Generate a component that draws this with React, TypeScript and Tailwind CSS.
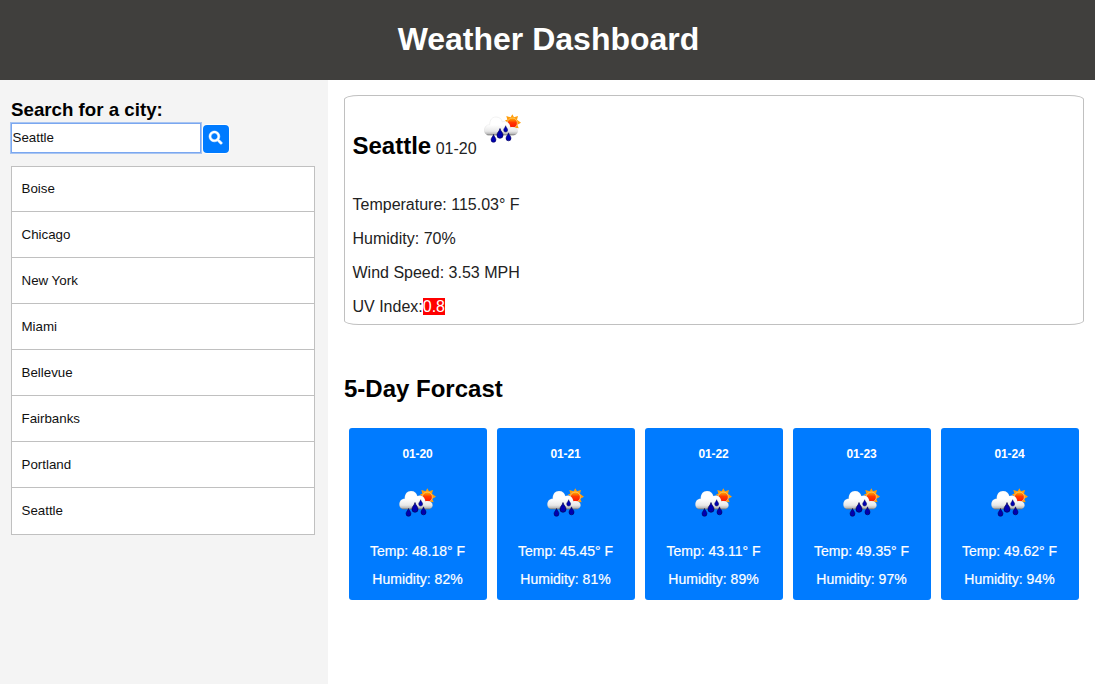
import React from "react";
import { FaSearch } from "react-icons/fa";

const cities = ["Boise", "Chicago", "New York", "Miami", "Bellevue", "Fairbanks", "Portland", "Seattle"];

const forecast = [
  { date: "01-20", temp: "48.18", humidity: 82 },
  { date: "01-21", temp: "45.45", humidity: 81 },
  { date: "01-22", temp: "43.11", humidity: 89 },
  { date: "01-23", temp: "49.35", humidity: 97 },
  { date: "01-24", temp: "49.62", humidity: 94 },
];

function Drop({ x, y, s }: { x: number; y: number; s: number }) {
  return (
    <path
      transform={`translate(${x} ${y}) scale(${s})`}
      d="M0-13C1-7 7.5-3 7.5 3A7.5 8 0 0 1-7.5 3C-7.5-3-1-7 0-13Z"
      fill="#0000b0"
      stroke="#00004c"
      strokeWidth="1.6"
    />
  );
}

function RainIcon({ id, className = "" }: { id: string; className?: string }) {
  return (
    <svg viewBox="27 24 111 87" className={`h-[29px] w-[37px] shrink-0 ${className}`} aria-hidden="true">
      <defs>
        <linearGradient id={`${id}-cloud`} gradientUnits="userSpaceOnUse" x1="0" y1="32" x2="0" y2="88">
          <stop offset="0.45" stopColor="#ffffff" />
          <stop offset="0.78" stopColor="#e8e8e8" />
          <stop offset="0.92" stopColor="#bcbcbc" />
          <stop offset="1" stopColor="#6a6a6a" />
        </linearGradient>
        <linearGradient id={`${id}-sun`} x1="0" y1="0" x2="0" y2="1">
          <stop offset="0" stopColor="#ffb800" />
          <stop offset="0.45" stopColor="#ff3a00" />
          <stop offset="1" stopColor="#ff1000" />
        </linearGradient>
      </defs>
      <path
        fill="#ff9d0a"
        d="M112 25L117 34L129 30L126 41L138 50L127 56L131 67L119 65L112 74L104 64L94 60L98 51L90 43L97 41L94 30L107 34Z"
      />
      <circle cx="112" cy="51" r="15" fill={`url(#${id}-sun)`} stroke="#ffd08a" strokeWidth="2" />
      <path
        fill={`url(#${id}-cloud)`}
        stroke="#8a8a8a"
        strokeOpacity="0.35"
        strokeWidth="1"
        d="M41 88C33 88 28 81 28 73C28 63 34 56 44 56C44 42 51 33 63 33C74 33 80 39 82 48C93 43 105 50 106 64C119 61 128 67 128 76C128 83 122 88 115 88Z"
      />
      <Drop x={55.5} y={98} s={0.98} />
      <Drop x={75} y={83.5} s={1.22} />
      <Drop x={92} y={69.5} s={0.8} />
      <Drop x={100.5} y={93.5} s={1} />
    </svg>
  );
}

export default function App() {
  return (
    <div className="flex h-[684px] w-full flex-col overflow-hidden bg-white font-['Liberation_Sans',Arial,sans-serif] text-black">
      <header className="flex h-20 shrink-0 items-center justify-center bg-[#403f3d]">
        <h1 className="pb-0.5 pl-0.5 text-[32px] leading-[36px] font-bold text-white">Weather Dashboard</h1>
      </header>

      <div className="flex min-h-0 flex-1">
        <aside className="w-[328px] shrink-0 bg-[#f4f4f4] pt-[19px] pr-[13px] pl-[11px]">
          <h3 className="text-[18.72px] leading-[22px] font-bold">Search for a city:</h3>
          <div className="mt-[2px] flex items-start gap-[2px]">
            <input
              aria-label="City"
              defaultValue="Seattle"
              className="h-[30px] w-[190px] border border-[#7aa7f0] bg-white pr-px pb-px pl-[0.5px] text-[13.33px] text-[#111] shadow-[0_0_0_1px_#a9c5f1] outline-none"
            />
            <button
              aria-label="Search"
              className="mt-[2px] flex h-[28px] w-[26px] items-center justify-center rounded-[4px] bg-[#007bff] pb-[2px] text-white shadow-[0_0_0_1px_#ffffff]"
            >
              <FaSearch className="size-[13.33px] overflow-visible stroke-white stroke-[20]" />
            </button>
          </div>
          <ul className="mt-[13px] border border-[#c0c0c0] bg-white">
            {cities.map((city) => (
              <li
                key={city}
                className="h-[46px] border-b border-[#c0c0c0] pl-[9.5px] text-[13.33px] leading-[45px] text-[#111] first:h-[45px] first:leading-[43px] last:border-b-0"
              >
                {city}
              </li>
            ))}
          </ul>
        </aside>

        <main className="flex-1 pt-[15px] pr-[11px] pl-4">
          <section className="h-[230px] rounded-[2%] border border-[#c0c0c0] pt-[18px] pl-[7.5px]">
            <div className="flex h-[74px] items-start">
              <h2 className="mt-[18px] text-2xl leading-[27px] font-bold">Seattle</h2>
              <span className="mt-[26px] ml-[4.5px] text-base leading-[18px] text-[#222]">01-20</span>
              <RainIcon id="current" className="ml-[7px]" />
            </div>
            <div className="text-base leading-[34px] text-[#222]">
              <p>Temperature: 115.03° F</p>
              <p>Humidity: 70%</p>
              <p>Wind Speed: 3.53 MPH</p>
              <p>
                UV Index:<span className="bg-[#ff0000] text-white">0.8</span>
              </p>
            </div>
          </section>

          <h2 className="mt-[50px] text-2xl leading-[27px] font-bold">5-Day Forcast</h2>
          <div className="mt-[26px] flex gap-[10px] pl-[5px]">
            {forecast.map((day) => (
              <article
                key={day.date}
                className="flex h-[172px] w-[138px] flex-col items-center rounded-[3px] bg-[#007bff] pt-[19px] pr-px text-white"
              >
                <h6 className="text-[12px] leading-[14px] font-bold tracking-[-0.1px]">{day.date}</h6>
                <RainIcon id={`day-${day.date}`} className="mt-[27px]" />
                <p className="mt-[26px] text-[14px] leading-4 [-webkit-text-stroke:0.2px_white]">Temp: {day.temp}° F</p>
                <p className="mt-3 text-[14px] leading-4 [-webkit-text-stroke:0.2px_white]">Humidity: {day.humidity}%</p>
              </article>
            ))}
          </div>
        </main>
      </div>
    </div>
  );
}
